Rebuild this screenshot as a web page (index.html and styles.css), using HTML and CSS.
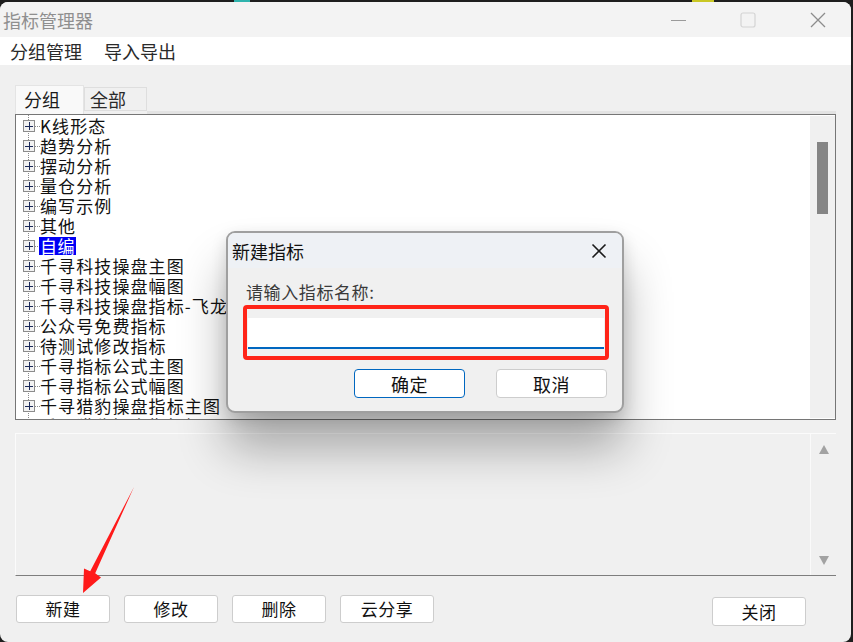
FILE: index.html
```html
<!DOCTYPE html>
<html lang="zh">
<head>
<meta charset="utf-8">
<title>指标管理器</title>
<link rel="stylesheet" href="styles.css">
</head>
<body>
<div class="desk">
  <span class="bit teal"></span><span class="bit yellow"></span>
  <div class="win">
    <div class="titlebar">
      <span class="title">指标管理器</span>
      <div class="ctrls">
        <span class="ctl"><svg width="16" height="16" viewBox="0 0 16 16"><path d="M1 8.5h15" stroke="#9a9a9a" stroke-width="1.2"/></svg></span>
        <span class="ctl"><svg width="16" height="16" viewBox="0 0 16 16"><rect x="1" y="1" width="14" height="14" rx="2" fill="none" stroke="#d4d4d4" stroke-width="1.2"/></svg></span>
        <span class="ctl"><svg width="16" height="16" viewBox="0 0 16 16"><path d="M1 1L15 15M15 1L1 15" stroke="#8c8c8c" stroke-width="1.3"/></svg></span>
      </div>
    </div>
    <div class="menubar">
      <span class="menu">分组管理</span>
      <span class="menu">导入导出</span>
    </div>
    <div class="content">
      <div class="tabs">
        <div class="tab active">分组</div>
        <div class="tab">全部</div>
        <div class="tabfill"></div>
      </div>
      <div class="tree">
        <div class="list">
          <div class="row"><span class="pm"></span><span class="dot"></span><span class="lbl">K线形态</span></div>
          <div class="row"><span class="pm"></span><span class="dot"></span><span class="lbl">趋势分析</span></div>
          <div class="row"><span class="pm"></span><span class="dot"></span><span class="lbl">摆动分析</span></div>
          <div class="row"><span class="pm"></span><span class="dot"></span><span class="lbl">量仓分析</span></div>
          <div class="row"><span class="pm"></span><span class="dot"></span><span class="lbl">编写示例</span></div>
          <div class="row"><span class="pm"></span><span class="dot"></span><span class="lbl">其他</span></div>
          <div class="row"><span class="pm"></span><span class="dot"></span><span class="lbl sel">自编</span></div>
          <div class="row"><span class="pm"></span><span class="dot"></span><span class="lbl">千寻科技操盘主图</span></div>
          <div class="row"><span class="pm"></span><span class="dot"></span><span class="lbl">千寻科技操盘幅图</span></div>
          <div class="row"><span class="pm"></span><span class="dot"></span><span class="lbl">千寻科技操盘指标-飞龙</span></div>
          <div class="row"><span class="pm"></span><span class="dot"></span><span class="lbl">公众号免费指标</span></div>
          <div class="row"><span class="pm"></span><span class="dot"></span><span class="lbl">待测试修改指标</span></div>
          <div class="row"><span class="pm"></span><span class="dot"></span><span class="lbl">千寻指标公式主图</span></div>
          <div class="row"><span class="pm"></span><span class="dot"></span><span class="lbl">千寻指标公式幅图</span></div>
          <div class="row"><span class="pm"></span><span class="dot"></span><span class="lbl">千寻猎豹操盘指标主图</span></div>
          <div class="row"><span class="pm"></span><span class="dot"></span><span class="lbl">千寻猎豹操盘指标幅图</span></div>
        </div>
        <div class="vscroll">
          <div class="thumb"></div>
        </div>
      </div>
      <div class="panel">
        <div class="panelbody"></div>
        <div class="pscroll">
          <span class="tri up"></span>
          <span class="tri down"></span>
        </div>
      </div>
      <div class="buttons">
        <button class="btn">新建</button>
        <button class="btn">修改</button>
        <button class="btn">删除</button>
        <button class="btn">云分享</button>
        <button class="btn close">关闭</button>
      </div>
    </div>

    <div class="dialog">
      <div class="dtitle">
        <span>新建指标</span>
        <svg class="dx" width="16" height="16" viewBox="0 0 16 16"><path d="M1.5 1.5L14.5 14.5M14.5 1.5L1.5 14.5" stroke="#1a1a1a" stroke-width="1.6"/></svg>
      </div>
      <div class="dbody">
        <div class="dlabel">请输入指标名称:</div>
        <div class="redframe">
          <div class="input"></div>
        </div>
        <div class="dbtns">
          <button class="btn dbtn ok">确定</button>
          <button class="btn dbtn">取消</button>
        </div>
      </div>
    </div>

    <svg class="arrow" width="851" height="640" viewBox="0 0 851 640">
      <polygon points="134,485 95.2,571.3 101,575.5 83,591 84,566.4 90.2,569.2" fill="#ff1a1a"/>
    </svg>
  </div>
</div>
</body>
</html>
```

FILE: styles.css
```css
html, body {
  margin: 0;
  padding: 0;
}
body {
  width: 853px;
  height: 642px;
  overflow: hidden;
  background: #1e1e1e;
  font-family: "Noto Sans CJK SC", "Noto Sans", sans-serif;
}
.desk {
  position: relative;
  width: 853px;
  height: 642px;
  padding-top: 2px;
  box-sizing: border-box;
}
.bit {
  position: absolute;
  top: 0;
  height: 2px;
}
.bit.teal {
  left: 234px;
  width: 16px;
  background: #2fb3ad;
}
.bit.yellow {
  left: 692px;
  width: 22px;
  background: #c9c724;
}
.win {
  position: relative;
  width: 851px;
  height: 640px;
  background: #f0f0f0;
  border-radius: 8px;
  overflow: hidden;
}
.titlebar {
  height: 35px;
  background: #f3f3f3;
  display: flex;
  align-items: center;
  justify-content: space-between;
}
.title {
  font-size: 18px;
  color: #8f8f8f;
  padding-left: 3px;
  line-height: 20px;
  margin-top: 1px;
}
.ctrls {
  display: flex;
  align-items: center;
  padding-right: 25px;
}
.ctl {
  display: flex;
  width: 16px;
  height: 16px;
  margin-left: 54px;
  margin-top: 1px;
}
.ctl:first-child {
  margin-left: 0;
}
.menubar {
  height: 28px;
  background: #ffffff;
  display: flex;
  align-items: center;
  padding-left: 10px;
  gap: 22px;
}
.menu {
  font-size: 18px;
  color: #2a2a2a;
  line-height: 20px;
}
.content {
  padding: 20px 0 0 15px;
}
.tabs {
  display: flex;
  align-items: flex-end;
  height: 29px;
  width: 821px;
}
.tab {
  box-sizing: border-box;
  font-size: 18px;
  line-height: 22px;
  color: #1a1a1a;
}
.tab.active {
  width: 69px;
  height: 29px;
  background: #f9f9f9;
  border: 1px solid #e4e4e4;
  border-bottom: none;
  padding: 2px 0 0 8px;
}
.tab:not(.active) {
  width: 63px;
  height: 24px;
  margin-bottom: 3px;
  background: #f0f0f0;
  border: 1px solid #dedede;
  padding: 0 0 0 5px;
  color: #2a2a2a;
}
.tabfill {
  flex: 1;
  height: 3px;
  margin-bottom: 0;
  background: #e3e3e3;
}
.tree {
  box-sizing: border-box;
  width: 821px;
  height: 306px;
  border: 1px solid #767676;
  background: #ffffff;
  display: flex;
}
.list {
  flex: 1;
  overflow: hidden;
  padding: 1px 0 0 7px;
  background-image: linear-gradient(to bottom, #8a8a8a 1px, transparent 1px);
  background-size: 1px 2px;
  background-position: 12px 0;
  background-repeat: repeat-y;
}
.row {
  height: 20px;
  display: flex;
  align-items: center;
}
.pm {
  box-sizing: border-box;
  width: 12px;
  height: 12px;
  border: 1px solid #8c8c8c;
  background:
    linear-gradient(#1b2a5a, #1b2a5a) center / 8px 1px no-repeat,
    linear-gradient(#1b2a5a, #1b2a5a) center / 1px 8px no-repeat,
    #f2f2f2;
  flex: none;
}
.dot {
  width: 5px;
  height: 1px;
  background-image: linear-gradient(to right, #8a8a8a 1px, transparent 1px);
  background-size: 2px 1px;
  flex: none;
}
.lbl {
  font-size: 17px;
  letter-spacing: 1.1px;
  color: #111;
  line-height: 20px;
  height: 20px;
  white-space: nowrap;
}
.lbl.sel {
  background: #0000f5;
  color: #ffffff;
  padding: 0 1px;
  margin-left: -1px;
  height: 18px;
  line-height: 18px;
  letter-spacing: 0.6px;
}
.vscroll {
  width: 25px;
  margin: 1px 0;
  background: #f0f0f0;
  flex: none;
}
.thumb {
  width: 11px;
  height: 72px;
  margin: 26px 0 0 7px;
  background: #858585;
}
.panel {
  box-sizing: border-box;
  width: 821px;
  height: 143px;
  margin-top: 13px;
  border-top: 1px solid #fbfbfb;
  border-left: 1px solid #fbfbfb;
  border-bottom: 1px solid #7e7e7e;
  background: #f0f0f0;
  display: flex;
}
.panelbody {
  flex: 1;
}
.pscroll {
  width: 26px;
  border-left: 1px solid #fafafa;
  display: flex;
  flex-direction: column;
  justify-content: space-between;
  align-items: center;
  padding: 11px 0 10px;
  box-sizing: border-box;
}
.tri {
  width: 0;
  height: 0;
  border-left: 5px solid transparent;
  border-right: 5px solid transparent;
}
.tri.up {
  border-bottom: 9px solid #a2a2a2;
}
.tri.down {
  border-top: 9px solid #a2a2a2;
}
.buttons {
  display: flex;
  align-items: flex-start;
  gap: 14px;
  margin-top: 19px;
  padding-left: 1px;
  width: 790px;
}
.btn {
  box-sizing: border-box;
  width: 94px;
  height: 28px;
  background: #ffffff;
  border: 1px solid #cdcdcd;
  border-radius: 3px;
  font-family: "Noto Sans CJK SC", "Noto Sans", sans-serif;
  font-size: 17px;
  color: #111;
  padding: 0;
  line-height: 24px;
  letter-spacing: 0.5px;
}
.btn.close {
  margin-left: auto;
  margin-top: 2px;
  height: 29px;
}
.dialog {
  position: absolute;
  left: 226px;
  top: 229px;
  width: 398px;
  height: 182px;
  box-sizing: border-box;
  border: 2px solid #9f9f9f;
  border-radius: 9px;
  background: #f0f0f0;
  overflow: hidden;
  box-shadow: 0 36px 48px rgba(0, 0, 0, 0.3), 0 6px 16px rgba(0, 0, 0, 0.14);
}
.dtitle {
  height: 35px;
  background: #eef1f5;
  display: flex;
  align-items: center;
  justify-content: space-between;
  padding: 0 15px 0 4px;
  font-size: 18px;
  color: #111;
  line-height: 20px;
}
.dtitle span {
  margin-top: 1px;
}
.dbody {
  padding: 14px 13px 0 15px;
}
.dlabel {
  font-size: 17px;
  line-height: 20px;
  color: #3a3a3a;
  padding-left: 3px;
  letter-spacing: 0.6px;
}
.redframe {
  box-sizing: border-box;
  height: 55px;
  margin-top: 3px;
  border: 4px solid #ff2418;
  border-radius: 4px;
  padding: 9px 1px 7px;
  background: #f0f0f0;
}
.input {
  height: 29px;
  background: #ffffff;
  border-bottom: 2px solid #0067c0;
}
.dbtns {
  display: flex;
  justify-content: flex-end;
  gap: 31px;
  margin-top: 9px;
  padding-right: 2px;
}
.dbtn {
  width: 111px;
  height: 29px;
  border-radius: 4px;
  font-size: 18px;
}
.dbtn.ok {
  border-color: #0067c0;
}
.arrow {
  position: absolute;
  left: 0;
  top: 0;
  pointer-events: none;
}
```
